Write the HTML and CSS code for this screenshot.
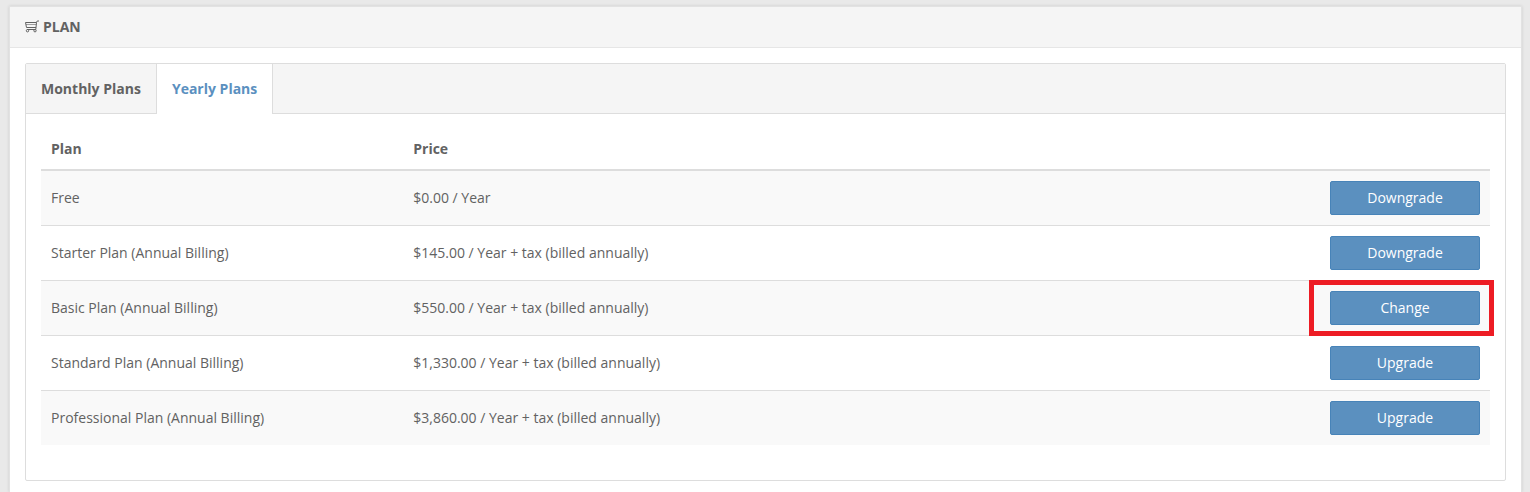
FILE: index.html
```html
<!DOCTYPE html>
<html lang="en">
<head>
    <meta charset="UTF-8">
    <meta name="viewport" content="width=device-width, initial-scale=1.0">
    <title>Plan</title>
    <link rel="stylesheet" href="styles.css">
</head>
<body>
    <div class="panel">
        <div class="panel-heading">
            <svg class="cart" width="14" height="14" viewBox="0 0 14 14" aria-hidden="true">
                <path d="M14 1H12.200L11.500 2.500L10.800 9.500H2M11.500 2.500H.5L1.500 7.500H11"/>
                <path class="thin" d="M1 4.500h10.300"/>
                <circle cx="2.500" cy="10.700" r="1.200"/>
                <circle cx="10" cy="10.700" r="1.200"/>
            </svg>
            <h1>PLAN</h1>
        </div>

        <div class="panel-body">
            <div class="tab-box">
                <nav class="tabs">
                    <a href="#monthly">Monthly Plans</a>
                    <a href="#yearly" class="active">Yearly Plans</a>
                </nav>

                <div class="tab-content" id="yearly">
                    <table class="plans">
                        <thead>
                            <tr>
                                <th class="col-plan">Plan</th>
                                <th>Price</th>
                                <th class="action"></th>
                            </tr>
                        </thead>
                        <tbody>
                            <tr>
                                <td>Free</td>
                                <td>$0.00 / Year</td>
                                <td class="action"><button type="button" class="btn">Downgrade</button></td>
                            </tr>
                            <tr>
                                <td>Starter Plan (Annual Billing)</td>
                                <td>$145.00 / Year + tax (billed annually)</td>
                                <td class="action"><button type="button" class="btn">Downgrade</button></td>
                            </tr>
                            <tr>
                                <td>Basic Plan (Annual Billing)</td>
                                <td>$550.00 / Year + tax (billed annually)</td>
                                <td class="action highlight"><button type="button" class="btn">Change</button></td>
                            </tr>
                            <tr>
                                <td>Standard Plan (Annual Billing)</td>
                                <td>$1,330.00 / Year + tax (billed annually)</td>
                                <td class="action"><button type="button" class="btn">Upgrade</button></td>
                            </tr>
                            <tr>
                                <td>Professional Plan (Annual Billing)</td>
                                <td>$3,860.00 / Year + tax (billed annually)</td>
                                <td class="action"><button type="button" class="btn">Upgrade</button></td>
                            </tr>
                        </tbody>
                    </table>
                </div>
            </div>
        </div>
    </div>
</body>
</html>
```

FILE: styles.css
```css
* {
    box-sizing: border-box;
}

body {
    margin: 0;
    padding: 6px 8px 0 9px;
    background-color: #e9e9e9;
    color: #626262;
    font-family: "Open Sans", "Noto Sans", sans-serif;
    font-size: 14px;
    line-height: 20px;
}

.panel {
    min-height: calc(100vh - 6px);
    background-color: #fff;
    border: 1px solid #e2e2e2;
    border-bottom: none;
    box-shadow: 0 0 3px rgba(0, 0, 0, 0.12);
}

.panel-heading {
    display: flex;
    align-items: center;
    gap: 4px;
    padding: 10px 15px;
    background-color: #f5f5f5;
    border-bottom: 1px solid #e6e6e6;
}

.panel-heading h1 {
    margin: 0;
    font-size: 14px;
    font-weight: bold;
}

.cart {
    fill: none;
    stroke: #626262;
    stroke-width: 1;
}

.cart .thin {
    opacity: 0.6;
}

.panel-body {
    padding: 15px 15px 0;
}

.tab-box {
    border: 1px solid #ddd;
    border-radius: 2px;
}

.tabs {
    display: flex;
    background-color: #f5f5f5;
    border-bottom: 1px solid #ddd;
}

.tabs a {
    padding: 15px 15px 14px;
    color: #626262;
    font-weight: bold;
    text-decoration: none;
    border-right: 1px solid #ddd;
}

/* the open tab covers the line under the bar */
.tabs .active {
    margin-bottom: -1px;
    padding-bottom: 15px;
    background-color: #fff;
    color: #5b90bf;
}

.tab-content {
    padding: 15px 15px 35px;
}

.plans {
    width: 100%;
    border-collapse: separate;
    border-spacing: 0;
}

.plans th {
    padding: 10px;
    text-align: left;
    border-bottom: 2px solid #ddd;
}

.plans td {
    padding: 10px;
    border-top: 1px solid #ddd;
}

.plans tbody tr:first-child td {
    border-top: none;
}

.plans tbody tr:nth-child(odd) {
    background-color: #f9f9f9;
}

.plans .col-plan {
    width: 25%;
}

.plans .action {
    width: 170px;
}

.btn {
    display: block;
    width: 100%;
    padding: 6px 12px;
    background-color: #5b90bf;
    border: 1px solid #4783b8;
    border-radius: 2px;
    color: #fff;
    font-family: inherit;
    font-size: 14px;
    line-height: 20px;
    cursor: pointer;
}

.btn:hover {
    background-color: #4783b8;
}

/* red frame around the plan's button */
.highlight {
    position: relative;
}

.highlight::after {
    content: "";
    position: absolute;
    top: -1px;
    right: -4px;
    bottom: -1px;
    left: -11px;
    border: 5px solid #ed1c24;
    pointer-events: none;
}
```
